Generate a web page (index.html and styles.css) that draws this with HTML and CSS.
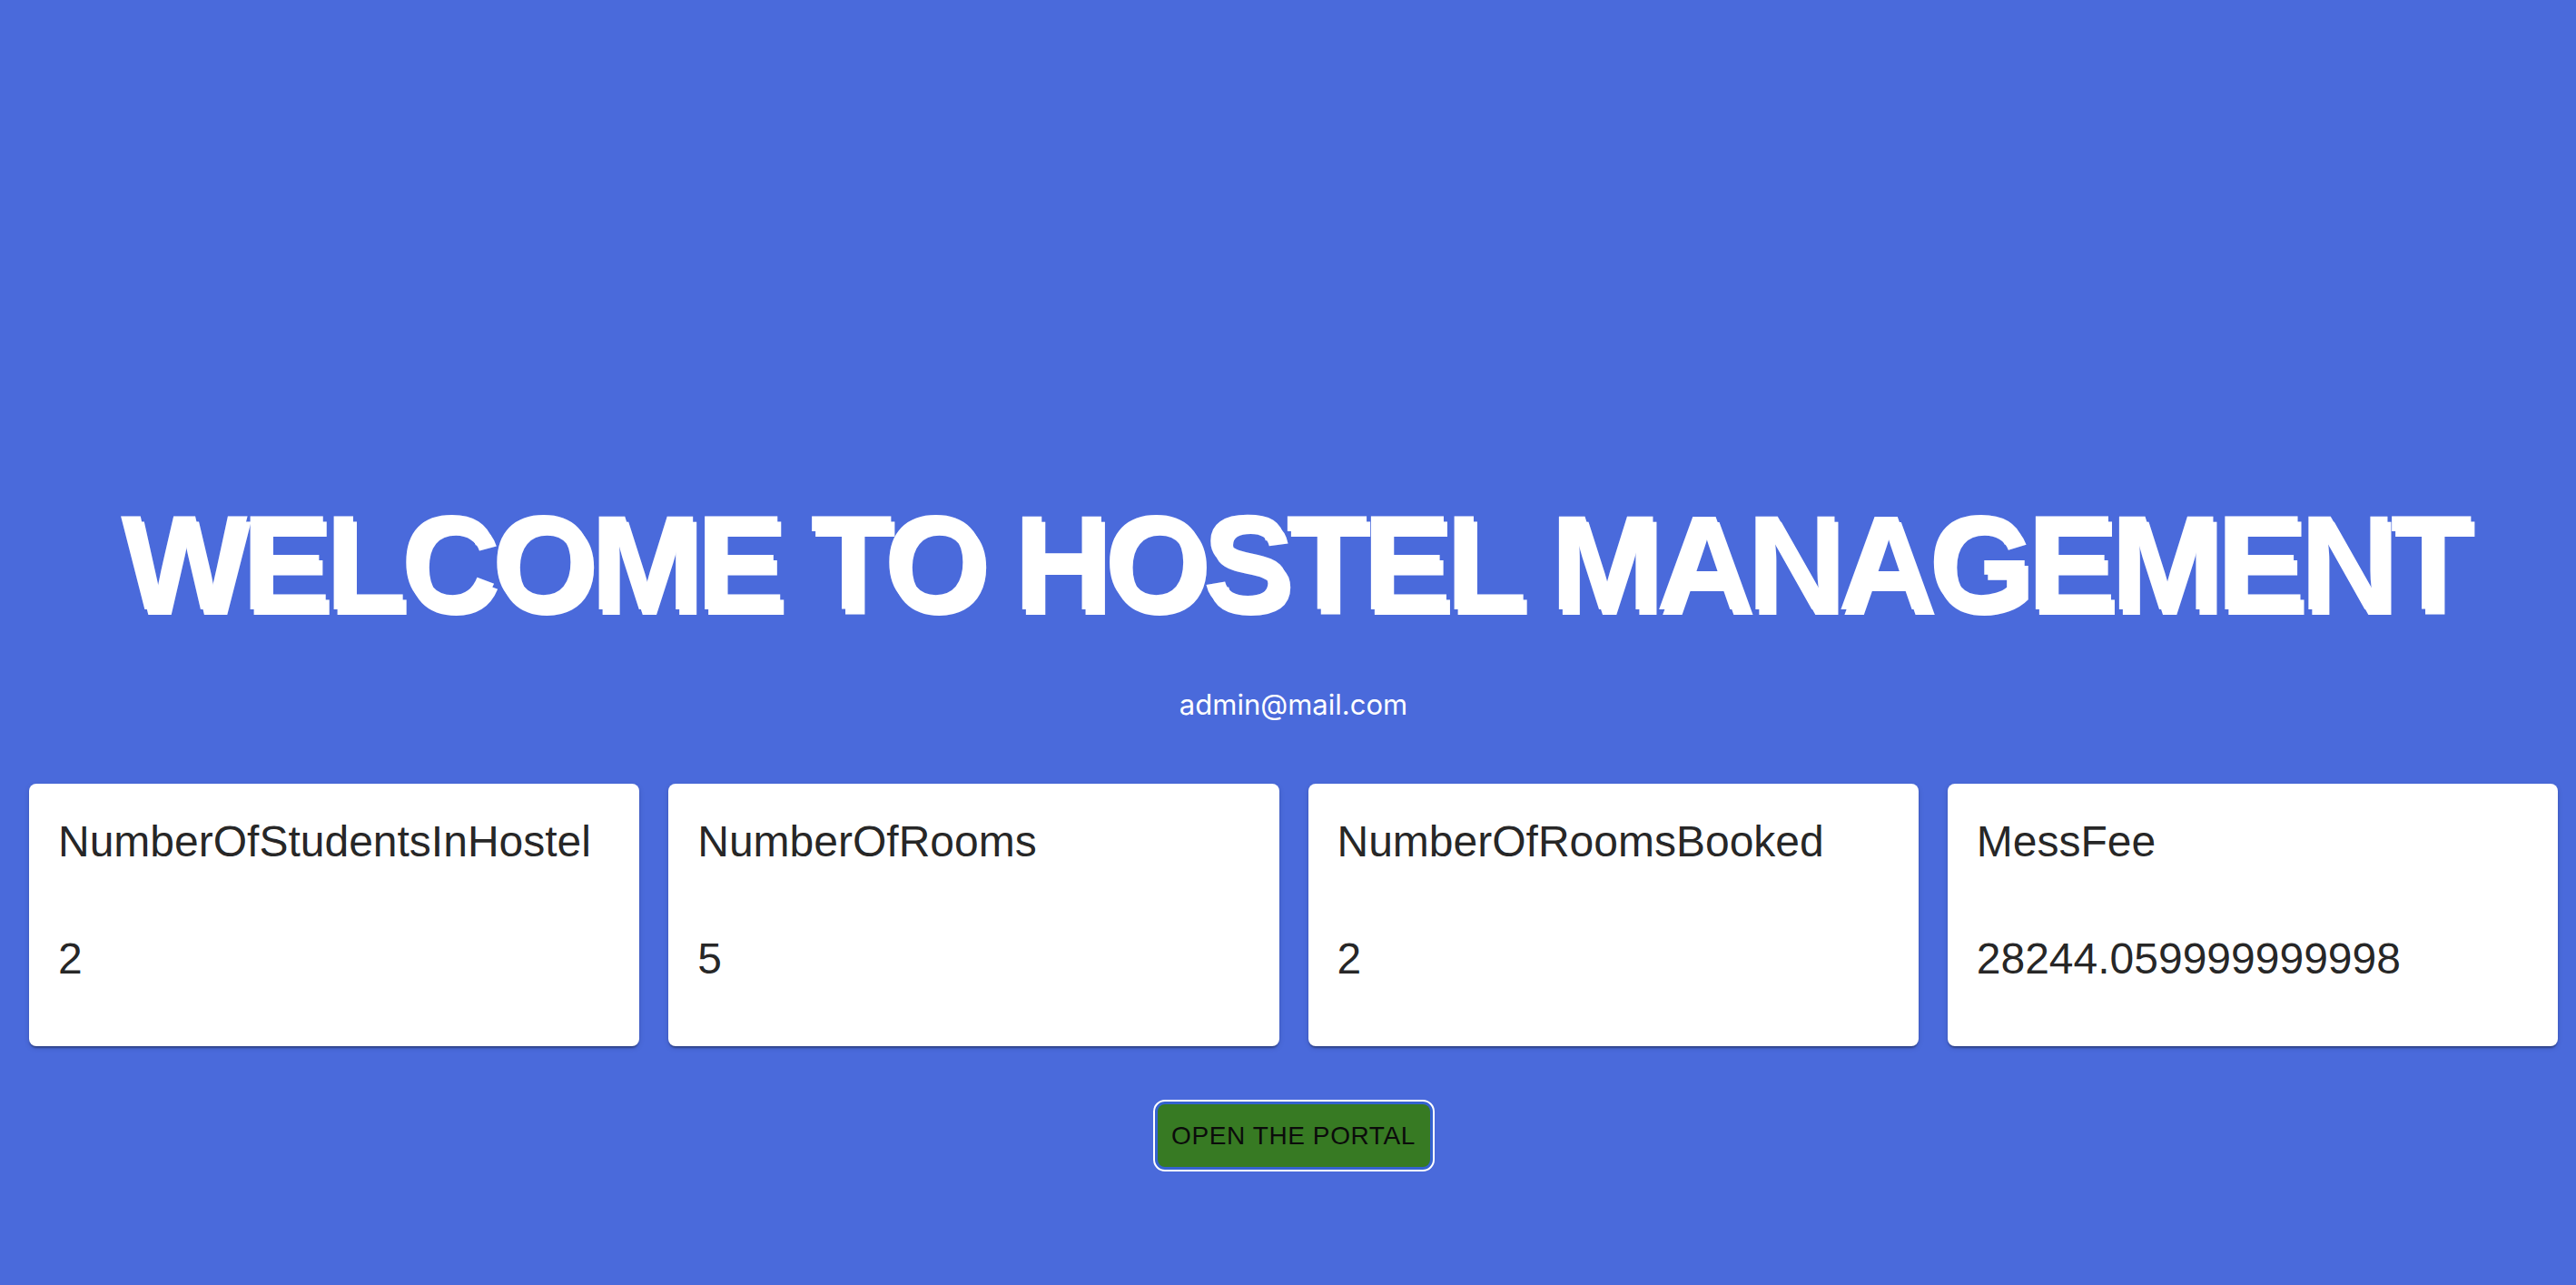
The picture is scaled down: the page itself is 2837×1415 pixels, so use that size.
FILE: index.html
```html
<!DOCTYPE html>
<html lang="en">
<head>
<meta charset="utf-8">
<title>Hostel Management</title>
<link rel="stylesheet" href="styles.css">
</head>
<body>
<main class="hero">
  <h1 class="hero-title">WELCOME TO HOSTEL MANAGEMENT</h1>
  <p class="hero-email">admin@mail.com</p>
  <section class="stats">
    <div class="card">
      <div class="card-label">NumberOfStudentsInHostel</div>
      <div class="card-value">2</div>
    </div>
    <div class="card">
      <div class="card-label">NumberOfRooms</div>
      <div class="card-value">5</div>
    </div>
    <div class="card">
      <div class="card-label">NumberOfRoomsBooked</div>
      <div class="card-value">2</div>
    </div>
    <div class="card">
      <div class="card-label">MessFee</div>
      <div class="card-value">28244.059999999998</div>
    </div>
  </section>
  <div class="actions">
    <button class="portal-btn" type="button">OPEN THE PORTAL</button>
  </div>
</main>
</body>
</html>
```

FILE: styles.css
```css
html, body {
  margin: 0;
  padding: 0;
}

body {
  background: #4a6adb;
  font-family: "Liberation Sans", Arial, Helvetica, sans-serif;
  min-height: 1415px;
}

.hero {
  padding: 535px 20px 0 32px;
  display: flex;
  flex-direction: column;
  align-items: stretch;
}

.hero-title {
  margin: 0;
  text-align: center;
  color: #fff;
  font-family: "Liberation Sans", Arial, sans-serif;
  font-weight: 700;
  font-size: 148px;
  line-height: 170px;
  letter-spacing: -6.8px;
  text-shadow: 4px 6px 0 #fff;
  white-space: nowrap;
}

.hero-email {
  margin: 53px 0 0;
  text-align: center;
  color: #fff;
  font-family: Inter, "Liberation Sans", sans-serif;
  font-size: 31px;
  line-height: 36px;
}

.stats {
  margin-top: 69px;
  display: grid;
  grid-template-columns: repeat(4, 1fr);
  gap: 32px;
}

.card {
  background: #fff;
  border-radius: 8px;
  padding: 32px 32px 64px;
  color: rgba(0, 0, 0, 0.87);
  box-shadow: 0 4px 2px -2px rgba(0, 0, 0, 0.2),
              0 2px 2px 0 rgba(0, 0, 0, 0.14),
              0 2px 6px 0 rgba(0, 0, 0, 0.12);
}

.card-label,
.card-value {
  font-size: 48px;
  line-height: 64px;
  white-space: nowrap;
}

.card-value {
  margin-top: 65px;
}

.actions {
  margin-top: 64px;
  display: flex;
  justify-content: center;
}

.portal-btn {
  width: 300px;
  height: 69px;
  padding: 10px 13px;
  border: 0;
  border-radius: 8px;
  background: #377a23;
  color: #0b0b0b;
  font-family: "Liberation Sans", Arial, sans-serif;
  font-size: 28px;
  line-height: 49px;
  letter-spacing: 0.6px;
  box-shadow: 0 0 0 4px #3562cf;
  outline: 2px solid #fff;
  outline-offset: 3px;
  cursor: pointer;
}
```
